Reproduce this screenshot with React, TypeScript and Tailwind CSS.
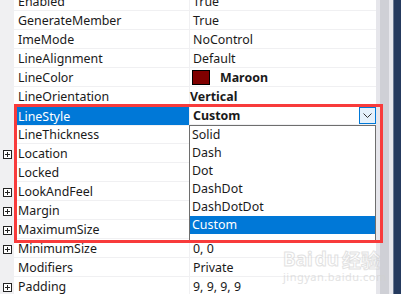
import React from "react";

type Row = {
  name: string;
  value?: React.ReactNode;
  plus?: boolean;
  selected?: boolean;
};

// values under the open dropdown are hidden, so they are left empty
const rows: Row[] = [
  { name: "Enabled", value: "True" },
  { name: "GenerateMember", value: "True" },
  { name: "ImeMode", value: "NoControl" },
  { name: "LineAlignment", value: "Default" },
  {
    name: "LineColor",
    value: (
      <span className="flex items-center gap-[10px] -ml-[1px]">
        <span className="w-[18px] h-[15px] border border-black bg-[#800000]" />
        <b className="font-bold">Maroon</b>
      </span>
    ),
  },
  { name: "LineOrientation", value: <b className="font-bold -ml-[3px]">Vertical</b> },
  { name: "LineStyle", selected: true, value: <b className="font-bold">Custom</b> },
  { name: "LineThickness" },
  { name: "Location", plus: true },
  { name: "Locked" },
  { name: "LookAndFeel", plus: true },
  { name: "Margin", plus: true },
  { name: "MaximumSize", plus: true },
  { name: "MinimumSize", value: "0, 0", plus: true },
  { name: "Modifiers", value: "Private" },
  { name: "Padding", value: "9, 9, 9, 9", plus: true },
];

const options = ["Solid", "Dash", "Dot", "DashDot", "DashDotDot", "Custom"];

function PlusBox() {
  return (
    <svg width="9" height="9" viewBox="0 0 9 9" className="block">
      <rect x="0.5" y="0.5" width="8" height="8" fill="white" stroke="#222" />
      <path d="M2 4.5h5M4.5 2v5" stroke="#222" />
    </svg>
  );
}

export default function App() {
  return (
    <div className="w-[401px] h-[294px] overflow-hidden relative bg-white flex font-['Noto_Sans',sans-serif] text-[12.4px] text-[#1a1a1a]">
      <div className="w-[376px] flex flex-col -mt-[8px] shrink-0">
        {rows.map((r) => (
          <div key={r.name} className="flex h-[19px] shrink-0">
            <div className="w-[14px] bg-[#f0f0f2] flex items-center justify-center pl-[1px] pt-[1px]">
              {r.plus && <PlusBox />}
            </div>
            <div
              className={
                r.selected
                  ? "w-[176px] border-b border-r border-[#f0f0f2] bg-[#0078d7] text-white pl-[4px] leading-[19px] pt-[1px] -mb-[1px]"
                  : "w-[176px] border-b border-r border-[#f0f0f2] pl-[4px] leading-[18px] pt-[1px]"
              }
            >
              {r.name}
            </div>
            <div className="flex-1 border-b border-[#f0f0f2] pl-[3px] pt-[1px] leading-[18px] flex items-center">
              {r.value}
            </div>
          </div>
        ))}
      </div>

      <div className="flex shrink-0">
        <div className="w-[4px] bg-[#e6e6eb]" />
        <div className="w-[9px] bg-[#cfd0d6]" />
        <div className="w-[4px] bg-[#e8e8ed]" />
        <div className="w-[1px] bg-[#6b7a93]" />
        <div className="w-[7px] bg-[#253a5e]" />
      </div>

      <div className="absolute left-[359px] top-[107px] w-[17px] h-[17px] border border-[#0078d7] bg-[#e5f1fb] flex items-center justify-center">
        <svg width="9" height="5" viewBox="0 0 9 5">
          <path d="M0.5 0.5L4.5 4.5L8.5 0.5" fill="none" stroke="#333" />
        </svg>
      </div>

      <div className="absolute left-[189px] top-[125px] w-[187px] h-[116px] border border-[#6e6e6e] bg-white">
        {options.map((o) => (
          <div
            key={o}
            className={
              o === "Custom"
                ? "h-[18px] leading-[18px] pl-[2px] bg-[#0078d7] text-white"
                : "h-[18px] leading-[18px] pl-[2px]"
            }
          >
            {o}
          </div>
        ))}
      </div>

      <div className="absolute left-[14px] top-[104px] w-[369px] h-[139px] border-[3px] border-[#f83b3b]" />

      <div className="absolute left-[283px] top-[250px] flex flex-col items-start gap-[2px] opacity-60 pointer-events-none">
        <div className="flex items-end text-[19px] font-bold leading-[19px] text-white [-webkit-text-stroke:1px_#cfcfcf]">
          <span>Bai</span>
          <span className="ml-[2px]">du</span>
          <span className="ml-[3px] font-['Noto_Sans_CJK_SC',sans-serif]">经验</span>
        </div>
        <div className="text-[11px] leading-[12px] text-[#d0d0d0] tracking-[0.5px]">jingyan.baidu.com</div>
      </div>
    </div>
  );
}
